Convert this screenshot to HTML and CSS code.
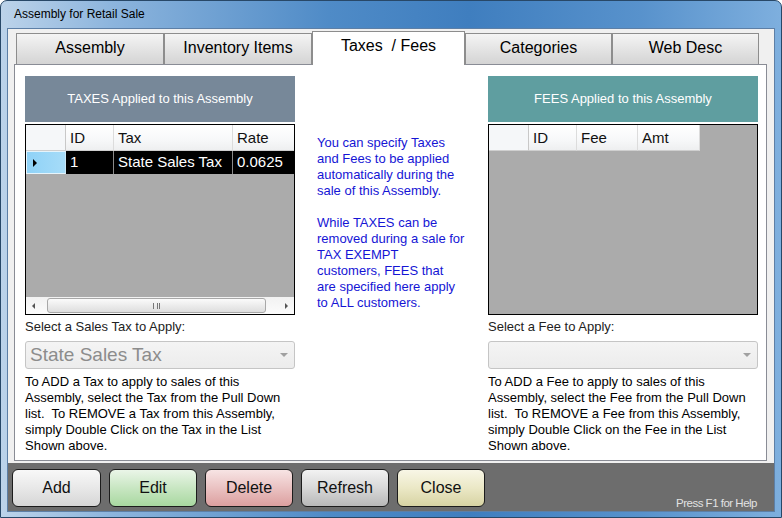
FILE: index.html
```html
<!DOCTYPE html>
<html>
<head>
    <title>Assembly for Retail Sale</title>
    <link rel="stylesheet" href="styles.css">
</head>
<body>
<div class="window">
    <div class="titlebar">Assembly for Retail Sale</div>
    <div class="client">
        <div class="tabs">
            <div class="tab w148">Assembly</div>
            <div class="tab w148">Inventory Items</div>
            <div class="tab active">Taxes&nbsp; / Fees</div>
            <div class="tab">Categories</div>
            <div class="tab">Web Desc</div>
        </div>
        <div class="panel">
            <div class="col">
                <div class="head taxes">TAXES Applied to this Assembly</div>
                <div class="grid">
                    <div class="grow ghead">
                        <div class="cell rh"></div>
                        <div class="cell c-id">ID</div>
                        <div class="cell c-tax">Tax</div>
                        <div class="cell c-rate">Rate</div>
                    </div>
                    <div class="grow gdata">
                        <div class="cell rh sel"><span class="arrow"></span></div>
                        <div class="cell c-id">1</div>
                        <div class="cell c-tax">State Sales Tax</div>
                        <div class="cell c-rate">0.0625</div>
                    </div>
                    <div class="hscroll">
                        <span class="sarrow left"></span>
                        <div class="thumb"><span class="grip"></span></div>
                        <span class="sarrow right"></span>
                    </div>
                </div>
                <div class="label">Select a Sales Tax to Apply:</div>
                <div class="combo"><span class="combo-text">State Sales Tax</span><span class="drop"></span></div>
                <div class="desc">
                    To ADD a Tax to apply to sales of this<br>
                    Assembly, select the Tax from the Pull Down<br>
                    list.&nbsp; To REMOVE a Tax from this Assembly,<br>
                    simply Double Click on the Tax in the List<br>
                    Shown above.
                </div>
            </div>

            <div class="info">
                You can specify Taxes<br>
                and Fees to be applied<br>
                automatically during the<br>
                sale of this Assembly.<br>
                <br>
                While TAXES can be<br>
                removed during a sale for<br>
                TAX EXEMPT<br>
                customers, FEES that<br>
                are specified here apply<br>
                to ALL customers.
            </div>

            <div class="col right">
                <div class="head fees">FEES Applied to this Assembly</div>
                <div class="grid">
                    <div class="grow ghead">
                        <div class="cell rh"></div>
                        <div class="cell c-id">ID</div>
                        <div class="cell c-fee">Fee</div>
                        <div class="cell c-amt">Amt</div>
                    </div>
                </div>
                <div class="label">Select a Fee to Apply:</div>
                <div class="combo"><span class="combo-text"></span><span class="drop"></span></div>
                <div class="desc">
                    To ADD a Fee to apply to sales of this<br>
                    Assembly, select the Fee from the Pull Down<br>
                    list.&nbsp; To REMOVE a Fee from this Assembly,<br>
                    simply Double Click on the Fee in the List<br>
                    Shown above.
                </div>
            </div>
        </div>
        <div class="bar">
            <div class="btn b-add">Add</div>
            <div class="btn b-edit">Edit</div>
            <div class="btn b-delete">Delete</div>
            <div class="btn b-refresh">Refresh</div>
            <div class="btn b-close">Close</div>
            <div class="help">Press F1 for Help</div>
        </div>
    </div>
</div>
</body>
</html>
```

FILE: styles.css
```css
body {
    margin: 0;
    font-family: "Liberation Sans", Arial, sans-serif;
}
.window {
    width: 782px;
    height: 518px;
    box-sizing: border-box;
    border: 1px solid #284868;
    border-radius: 7px 7px 0 0;
    background: linear-gradient(90deg, #bcd3ea 0%, #8db5dd 14%, #4f8bc7 42%, #3f7ebf 60%, #5892cc 82%, #7eafde 100%);
    padding: 0 6px 5px;
    display: flex;
    flex-direction: column;
}
.titlebar {
    height: 27px;
    line-height: 27px;
    padding-left: 7px;
    font-size: 12px;
    color: #000;
}
.client {
    flex: 1;
    border: 1px solid #5d7fa6;
    background: #f0f0f0;
    display: flex;
    flex-direction: column;
}
.tabs {
    display: flex;
    align-items: flex-end;
    height: 33px;
    margin: 2px 0 0 8px;
}
.tab {
    width: 147px;
    height: 31px;
    box-sizing: border-box;
    border: 1px solid #8d8d8d;
    border-bottom: none;
    background: linear-gradient(#f4f4f4, #e4e4e4 50%, #d4d4d4);
    font-size: 16px;
    line-height: 28px;
    text-align: center;
    color: #000;
}
.tab.w148 {
    width: 148px;
}
.tab.active {
    width: 153px;
    height: 34px;
    background: #fff;
    margin-bottom: -1px;
    position: relative;
    z-index: 1;
}
.panel {
    margin-left: 6px;
    width: 753px;
    height: 397px;
    box-sizing: border-box;
    border: 1px solid #898c95;
    background: #fff;
    padding: 11px 8px 0 10px;
    display: flex;
}
.col {
    width: 270px;
}
.col.right {
    margin-left: auto;
}
.head {
    height: 46px;
    line-height: 46px;
    text-align: center;
    color: #fff;
    font-size: 13px;
    margin-bottom: 2px;
}
.taxes {
    background: #778899;
}
.fees {
    background: #5f9ea0;
}
.grid {
    height: 191px;
    box-sizing: border-box;
    border: 1px solid #000;
    background: #ababab;
    display: flex;
    flex-direction: column;
}
.grow {
    display: flex;
}
.cell {
    box-sizing: border-box;
    padding-left: 4px;
    font-size: 15px;
    white-space: nowrap;
    overflow: hidden;
}
.ghead .cell {
    height: 26px;
    line-height: 26px;
    background: linear-gradient(#ffffff, #f7f8f9 60%, #eeeff0);
    border-right: 1px solid #dcdcdc;
    border-bottom: 1px solid #cfcfcf;
    color: #111;
}
.ghead .rh {
    background: #f5f7f9;
    border-right: 1px solid #c8c8c8;
}
.gdata .cell {
    height: 23px;
    line-height: 22px;
    background: #000;
    color: #fff;
    border-right: 1px solid #8a8a8a;
}
.gdata .rh.sel {
    background: linear-gradient(90deg, #8fd2f7, #a6dcf8);
    border: 1px solid #e6f4fb;
    border-right-color: #c9e6f5;
    padding-left: 6px;
    display: flex;
    align-items: center;
}
.arrow {
    width: 0;
    height: 0;
    border-top: 4px solid transparent;
    border-bottom: 4px solid transparent;
    border-left: 4px solid #000;
}
.rh { width: 40px; }
.c-id { width: 48px; }
.c-tax { width: 119px; }
.c-rate { width: 61px; border-right: none !important; }
.c-fee { width: 61px; }
.c-amt { width: 62px; }
.hscroll {
    margin-top: auto;
    height: 17px;
    background: linear-gradient(#f2f2f2, #fbfbfb);
    display: flex;
    align-items: center;
}
.sarrow {
    width: 0;
    height: 0;
    border-top: 3px solid transparent;
    border-bottom: 3px solid transparent;
}
.sarrow.left {
    border-right: 3px solid #555;
    margin: 0 12px 0 6px;
}
.sarrow.right {
    border-left: 3px solid #555;
    margin: 0 6px 0 19px;
}
.thumb {
    width: 222px;
    height: 15px;
    box-sizing: border-box;
    border: 1px solid #a8a8a8;
    border-radius: 3px;
    background: linear-gradient(#fbfbfb, #ececec 50%, #dedede);
    display: flex;
    align-items: center;
    justify-content: center;
}
.grip {
    width: 7px;
    height: 6px;
    border-left: 1px solid #777;
    border-right: 1px solid #777;
    background: linear-gradient(90deg, transparent 3px, #777 3px, #777 4px, transparent 4px);
    box-sizing: border-box;
}
.label {
    margin-top: 4px;
    height: 16px;
    line-height: 16px;
    font-size: 13px;
    color: #222;
    margin-bottom: 6px;
}
.combo {
    height: 28px;
    box-sizing: border-box;
    border: 1px solid #c5c5c5;
    border-radius: 3px;
    background: linear-gradient(#f4f4f4, #ececec);
    display: flex;
    align-items: center;
    padding-left: 4px;
}
.combo-text {
    font-size: 19px;
    color: #8c8c8c;
}
.drop {
    margin-left: auto;
    margin-right: 6px;
    width: 0;
    height: 0;
    border-left: 4px solid transparent;
    border-right: 4px solid transparent;
    border-top: 4px solid #a0a0a0;
}
.desc {
    margin-top: 5px;
    font-size: 13px;
    line-height: 16px;
    color: #000;
}
.info {
    margin: 59px 0 0 22px;
    width: 160px;
    font-size: 13px;
    line-height: 16px;
    color: #1515d5;
}
.bar {
    flex: 1;
    margin-top: 2px;
    background: #6d6d6d;
    padding: 6px 0 0 4px;
    display: flex;
    align-items: flex-start;
    gap: 8px;
}
.btn {
    width: 88px;
    height: 38px;
    box-sizing: border-box;
    border: 1px solid #1c1c1c;
    border-radius: 6px;
    font-size: 16px;
    line-height: 36px;
    text-align: center;
    color: #111;
}
.b-add { width: 89px; background: linear-gradient(#f8f8f8, #e8e8e8 50%, #d6d6d6); }
.b-edit { background: linear-gradient(#eaf5e8, #c8e6c2 50%, #a8d8a0); }
.b-delete { background: linear-gradient(#f7e4e4, #eac2c2 50%, #dc9f9f); }
.b-refresh { background: linear-gradient(#f2f2f2, #d8d8d8 50%, #b8b8b8); }
.b-close { background: linear-gradient(#f8f6e6, #ebe8c6 50%, #d7d3a3); }
.help {
    margin-left: auto;
    margin-right: 17px;
    align-self: flex-end;
    margin-bottom: 2px;
    font-size: 11.5px;
    letter-spacing: -0.5px;
    color: #e2e2e2;
}
```
